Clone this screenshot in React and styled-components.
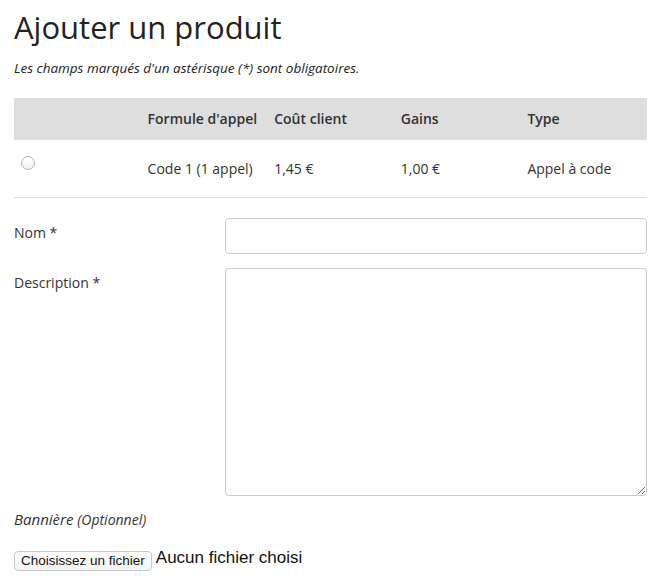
import React from "react";
import styled, { createGlobalStyle } from "styled-components";

const GlobalStyle = createGlobalStyle`
  html, body {
    margin: 0;
    padding: 0;
    background: #fff;
  }
  body {
    font-family: "Open Sans", "DejaVu Sans", sans-serif;
    color: #333;
  }
`;

const Page = styled.div`
  padding: 10px 10px 0 14px;
`;

const Title = styled.h1`
  margin: 0;
  font-size: 31px;
  font-weight: 400;
  line-height: 35px;
  color: #222;
`;

const Notice = styled.p`
  margin: 14px 0 0;
  font-size: 13.5px;
  font-style: italic;
  line-height: 18px;
  color: #222;
`;

const Table = styled.table`
  width: 100%;
  margin-top: 21px;
  border-collapse: collapse;
  table-layout: fixed;
  font-size: 14px;
  line-height: 20px;
`;

const HeadCell = styled.th`
  background: #dedede;
  text-align: left;
  font-weight: 600;
  padding: 11px 8px 11px 7px;
  height: 20px;
`;

const Row = styled.tr`
  border-bottom: 1px solid #dedede;
`;

const Cell = styled.td`
  padding: 19px 8px 18px 7px;
  vertical-align: top;
`;

const Radio = styled.input.attrs({ type: "radio" })`
  appearance: none;
  display: block;
  width: 14px;
  height: 14px;
  margin: -3px 0 0 0;
  border: 1px solid #b5b5b5;
  border-radius: 50%;
  background: linear-gradient(#fff, #f3f3f3);
  box-sizing: border-box;
`;

const Form = styled.div`
  margin-top: 20px;
  display: flex;
  flex-direction: column;
  gap: 14px;
`;

const Field = styled.div`
  display: grid;
  grid-template-columns: 211px 1fr;
  align-items: start;
`;

const Label = styled.label`
  font-size: 14px;
  line-height: 20px;
  padding-top: 5px;
`;

const TextInput = styled.input`
  height: 36px;
  border: 1px solid #ccc;
  border-radius: 4px;
  box-sizing: border-box;
  padding: 6px 10px;
  font: inherit;
`;

const TextArea = styled.textarea`
  height: 228px;
  border: 1px solid #ccc;
  border-radius: 4px;
  box-sizing: border-box;
  padding: 6px 10px;
  font: inherit;
  display: block;
`;

const Optional = styled.div`
  margin-top: 13px;
  font-size: 15px;
  font-style: italic;
  line-height: 20px;
  color: #333;
  span {
    font-size: 14px;
  }
`;

const FilePicker = styled.div`
  margin-top: 21px;
  display: flex;
  align-items: center;
  gap: 4px;
  font-family: "Liberation Sans", Arial, sans-serif;
`;

const FileButton = styled.button`
  height: 20px;
  padding: 0 6px;
  border: 1px solid #c8c8c8;
  border-radius: 4px;
  background: linear-gradient(#fff, #f4f4f4);
  font-family: "Liberation Sans", Arial, sans-serif;
  font-size: 13.5px;
  color: #111;
  line-height: 18px;
`;

const FileStatus = styled.span`
  font-size: 17px;
  color: #111;
  margin-top: -6px;
`;

const columns = ["", "Formule d'appel", "Coût client", "Gains", "Type"];

export default function App() {
  return (
    <Page>
      <GlobalStyle />
      <Title>Ajouter un produit</Title>
      <Notice>Les champs marqués d'un astérisque (*) sont obligatoires.</Notice>
      <Table>
        <thead>
          <tr>
            {columns.map((c, i) => (
              <HeadCell key={i}>{c}</HeadCell>
            ))}
          </tr>
        </thead>
        <tbody>
          <Row>
            <Cell>
              <Radio name="formule" />
            </Cell>
            <Cell>Code 1 (1 appel)</Cell>
            <Cell>1,45 €</Cell>
            <Cell>1,00 €</Cell>
            <Cell>Appel à code</Cell>
          </Row>
        </tbody>
      </Table>
      <Form>
        <Field>
          <Label>Nom *</Label>
          <TextInput />
        </Field>
        <Field>
          <Label>Description *</Label>
          <TextArea />
        </Field>
      </Form>
      <Optional>
        Bannière <span>(Optionnel)</span>
      </Optional>
      <FilePicker>
        <FileButton>Choisissez un fichier</FileButton>
        <FileStatus>Aucun fichier choisi</FileStatus>
      </FilePicker>
    </Page>
  );
}
